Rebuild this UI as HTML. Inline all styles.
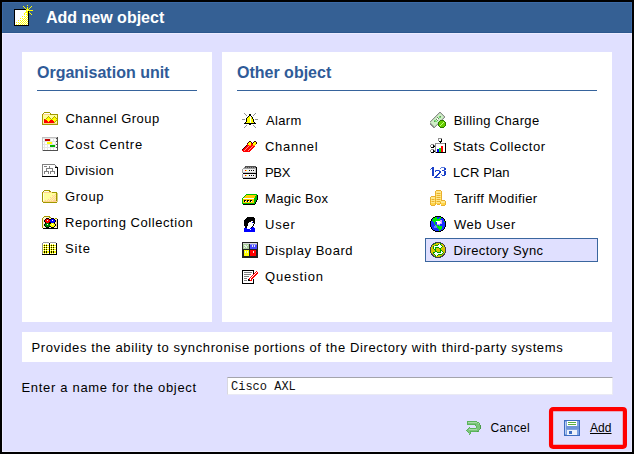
<!DOCTYPE html>
<html><head><meta charset="utf-8">
<style>
*{margin:0;padding:0;box-sizing:border-box}
html,body{width:634px;height:454px;overflow:hidden;background:#000}
body{position:relative;font-family:"Liberation Sans",sans-serif;font-size:13px;color:#000}
.a{position:absolute}
#hdr{left:2px;top:2px;width:630px;height:31px;background:#356094;border-top:1px solid #3c6aa6;border-left:1px solid #3c6aa6;border-right:1px solid #3c6aa6;border-bottom:1px solid #2c578e}
#bd{left:2px;top:33px;width:630px;height:419px;background:#e0e0ff;border:1px solid #ececff}
.pn{background:#fff}
.t{position:absolute;white-space:nowrap;line-height:13px;font-size:13px}
.h{position:absolute;white-space:nowrap;font-weight:bold;font-size:16px;line-height:16px;color:#2f5b98}
.ul{position:absolute;height:1px;background:#36639c}
.ic{position:absolute;width:16px;height:16px}
</style></head><body>
<div id="hdr" class="a"></div>
<div id="bd" class="a"></div>
<div class="h" style="left:46px;top:10px;color:#fff">Add new object</div>

<div class="a pn" style="left:22px;top:52px;width:190px;height:270px"></div>
<div class="a pn" style="left:222px;top:52px;width:390px;height:270px"></div>
<div class="h" style="left:37px;top:65px">Organisation unit</div>
<div class="ul" style="left:37px;top:90px;width:160px"></div>
<div class="h" style="left:237px;top:65px">Other object</div>
<div class="ul" style="left:237px;top:90px;width:360px"></div>

<div class="t" style="left:65.5px;top:112px;letter-spacing:0.458px">Channel Group</div>
<div class="t" style="left:65px;top:138px;letter-spacing:0.78px">Cost Centre</div>
<div class="t" style="left:65px;top:164px;letter-spacing:0.457px">Division</div>
<div class="t" style="left:65px;top:190px;letter-spacing:0.575px">Group</div>
<div class="t" style="left:65px;top:216px;letter-spacing:0.563px">Reporting Collection</div>
<div class="t" style="left:65px;top:242px;letter-spacing:0.833px">Site</div>

<div class="t" style="left:266px;top:114px;letter-spacing:0.35px">Alarm</div>
<div class="t" style="left:265px;top:140px;letter-spacing:0.7px">Channel</div>
<div class="t" style="left:265px;top:166px;letter-spacing:-0.3px">PBX</div>
<div class="t" style="left:265px;top:192px;letter-spacing:0.3px">Magic Box</div>
<div class="t" style="left:265px;top:218px;letter-spacing:0.767px">User</div>
<div class="t" style="left:265px;top:244px;letter-spacing:0.55px">Display Board</div>
<div class="t" style="left:265px;top:270px;letter-spacing:0.857px">Question</div>

<div class="a" style="left:425px;top:238px;width:173px;height:24px;background:#e0e0ff;border:1px solid #3a669e"></div>
<div class="t" style="left:453.7px;top:114px;letter-spacing:0.346px">Billing Charge</div>
<div class="t" style="left:453px;top:140px;letter-spacing:0.536px">Stats Collector</div>
<div class="t" style="left:453px;top:166px;letter-spacing:0.129px">LCR Plan</div>
<div class="t" style="left:454px;top:192px;letter-spacing:0.379px">Tariff Modifier</div>
<div class="t" style="left:454px;top:218px;letter-spacing:0.543px">Web User</div>
<div class="t" style="left:453.4px;top:244px;letter-spacing:0.4px">Directory Sync</div>

<div class="a pn" style="left:22px;top:332px;width:590px;height:30px"></div>
<div class="t" style="left:31.5px;top:341px;letter-spacing:0.622px">Provides the ability to synchronise portions of the Directory with third-party systems</div>
<div class="t" style="left:21.5px;top:381px;letter-spacing:0.685px">Enter a name for the object</div>
<div class="a" style="left:227px;top:377px;width:386px;height:18px;background:#fff;border-top:1px solid #a4a4ac;border-left:1px solid #d8d8e0;border-right:1px solid #eaeaf4;border-bottom:1px solid #eaeaf4"></div>
<div class="t" style="left:231px;top:381px;font-family:'Liberation Mono',monospace;font-size:12px;color:#111">Cisco AXL</div>

<div class="t" style="left:490.5px;top:422px;font-size:12px;letter-spacing:0.38px">Cancel</div>
<div class="t" style="left:590px;top:422px;font-size:12px;letter-spacing:0.05px;text-decoration:underline">Add</div>
<svg class="a" style="left:540px;top:400px" width="94" height="54" viewBox="0 0 94 54"><rect x="11.05" y="9.2" width="73.85" height="37.6" rx="2" ry="2" fill="none" stroke="#ff0000" stroke-width="4.2"/></svg>
<!-- header icon -->
<svg class="a" style="left:10px;top:4px" width="24" height="24" viewBox="0 0 24 24" shape-rendering="crispEdges"><!-- header icon --><path fill="#ffff00" d="M17 1h1v1h-1zM13 2h1v1h-1zM21 2h1v1h-1zM14 3h1v1h-1zM17 3h1v1h-1zM20 3h1v1h-1zM15 4h1v1h-1zM17 4h1v1h-1zM19 4h1v1h-1zM16 5h3v1h-3zM16 6h1v1h-1zM18 6h5v1h-5zM16 7h2v1h-2zM15 8h3v1h-3zM19 8h1v1h-1zM14 9h1v1h-1zM17 9h1v1h-1zM20 9h1v1h-1zM14 10h1v1h-1zM16 10h2v1h-2zM21 10h1v1h-1zM17 11h1v1h-1zM12 12h1v1h-1zM14 12h1v1h-1zM16 12h1v1h-1zM15 13h1v1h-1zM17 13h1v1h-1zM10 14h1v1h-1zM12 14h1v1h-1zM14 14h1v1h-1zM16 14h1v1h-1zM13 15h1v1h-1zM15 15h1v1h-1zM17 15h1v1h-1zM8 16h1v1h-1zM10 16h1v1h-1zM12 16h1v1h-1zM14 16h1v1h-1zM16 16h1v1h-1zM11 17h1v1h-1zM13 17h1v1h-1zM15 17h1v1h-1zM17 17h1v1h-1zM6 18h1v1h-1zM8 18h1v1h-1zM10 18h1v1h-1zM12 18h1v1h-1zM14 18h1v1h-1zM16 18h1v1h-1zM9 19h1v1h-1zM11 19h1v1h-1zM13 19h1v1h-1zM15 19h1v1h-1zM17 19h1v1h-1zM6 20h1v1h-1zM8 20h1v1h-1zM10 20h1v1h-1zM12 20h1v1h-1zM14 20h1v1h-1zM16 20h1v1h-1z"/><path fill="#000000" d="M4 5h12v1h-12zM4 6h1v1h-1zM4 7h1v1h-1zM18 7h1v1h-1zM4 8h1v1h-1zM18 8h1v1h-1zM4 9h1v1h-1zM18 9h1v1h-1zM4 10h1v1h-1zM18 10h1v1h-1zM4 11h1v1h-1zM18 11h1v1h-1zM4 12h1v1h-1zM18 12h1v1h-1zM4 13h1v1h-1zM18 13h1v1h-1zM4 14h1v1h-1zM18 14h1v1h-1zM4 15h1v1h-1zM18 15h1v1h-1zM4 16h1v1h-1zM18 16h1v1h-1zM4 17h1v1h-1zM18 17h1v1h-1zM4 18h1v1h-1zM18 18h1v1h-1zM4 19h1v1h-1zM18 19h1v1h-1zM4 20h1v1h-1zM18 20h1v1h-1zM4 21h15v1h-15z"/><path fill="#ffffff" d="M5 6h11v1h-11zM5 7h11v1h-11zM5 8h10v1h-10zM5 9h9v1h-9zM15 9h2v1h-2zM5 10h9v1h-9zM15 10h1v1h-1zM5 11h12v1h-12zM5 12h7v1h-7zM13 12h1v1h-1zM15 12h1v1h-1zM17 12h1v1h-1zM5 13h10v1h-10zM16 13h1v1h-1zM5 14h5v1h-5zM11 14h1v1h-1zM13 14h1v1h-1zM15 14h1v1h-1zM17 14h1v1h-1zM5 15h8v1h-8zM14 15h1v1h-1zM16 15h1v1h-1zM5 16h3v1h-3zM9 16h1v1h-1zM11 16h1v1h-1zM13 16h1v1h-1zM15 16h1v1h-1zM17 16h1v1h-1zM5 17h6v1h-6zM12 17h1v1h-1zM14 17h1v1h-1zM16 17h1v1h-1zM5 18h1v1h-1zM7 18h1v1h-1zM9 18h1v1h-1zM11 18h1v1h-1zM13 18h1v1h-1zM15 18h1v1h-1zM17 18h1v1h-1zM5 19h4v1h-4zM10 19h1v1h-1zM12 19h1v1h-1zM14 19h1v1h-1zM16 19h1v1h-1zM5 20h1v1h-1zM7 20h1v1h-1zM9 20h1v1h-1zM11 20h1v1h-1zM13 20h1v1h-1zM15 20h1v1h-1zM17 20h1v1h-1z"/><path fill="#ffffc0" d="M17 6h1v1h-1z"/></svg>
<!-- Billing Charge -->
<svg class="a" style="left:430px;top:112px" width="16" height="16" viewBox="0 0 16 16" shape-rendering="crispEdges"><!-- Billing Charge --><path fill="#8c8c8c" d="M9 0h2v1h-2zM8 1h1v1h-1zM11 1h1v1h-1zM7 2h1v1h-1zM12 2h1v1h-1zM6 3h1v1h-1zM13 3h1v1h-1zM5 4h1v1h-1zM14 4h1v1h-1zM4 5h1v1h-1zM14 5h1v1h-1zM3 6h1v1h-1zM13 6h1v1h-1zM2 7h1v1h-1zM12 7h1v1h-1zM1 8h1v1h-1zM0 9h1v1h-1zM0 11h1v1h-1zM0 12h2v1h-2zM7 12h1v1h-1zM1 13h2v1h-2zM6 13h1v1h-1zM2 14h2v1h-2zM5 14h1v1h-1zM3 15h2v1h-2z"/><path fill="#b8d8b0" d="M9 1h2v1h-2zM8 2h1v1h-1zM11 2h1v1h-1zM7 3h1v1h-1zM12 3h1v1h-1zM6 4h1v1h-1zM13 4h1v1h-1zM5 5h1v1h-1zM13 5h1v1h-1zM4 6h1v1h-1zM12 6h1v1h-1zM3 7h1v1h-1zM11 7h1v1h-1zM2 8h1v1h-1zM1 9h1v1h-1zM0 10h1v1h-1zM1 11h1v1h-1zM7 11h1v1h-1zM2 12h1v1h-1zM6 12h1v1h-1zM3 13h1v1h-1zM5 13h1v1h-1zM4 14h1v1h-1z"/><path fill="#d0ecc8" d="M9 2h2v1h-2zM8 3h4v1h-4zM7 4h2v1h-2zM11 4h2v1h-2zM6 5h1v1h-1zM8 5h1v1h-1zM11 5h2v1h-2zM5 6h2v1h-2zM9 6h3v1h-3zM4 7h2v1h-2zM8 7h3v1h-3zM3 8h1v1h-1zM6 8h1v1h-1zM8 8h2v1h-2zM2 9h2v1h-2zM7 9h2v1h-2zM1 10h7v1h-7zM2 11h5v1h-5zM3 12h3v1h-3zM4 13h1v1h-1z"/><path fill="#70e070" d="M9 4h1v1h-1zM9 5h2v1h-2zM4 8h2v1h-2zM5 9h2v1h-2z"/><path fill="#6a8a60" d="M10 4h1v1h-1zM7 5h1v1h-1zM8 6h1v1h-1zM6 7h1v1h-1zM7 8h1v1h-1zM4 9h1v1h-1z"/><path fill="#ffffff" d="M7 6h1v1h-1zM7 7h1v1h-1z"/><path fill="#2a7a00" d="M10 8h4v1h-4zM9 9h1v1h-1zM14 9h1v1h-1zM8 10h1v1h-1zM15 10h1v1h-1zM8 11h1v1h-1zM15 11h1v1h-1zM8 12h1v1h-1zM15 12h1v1h-1zM8 13h1v1h-1zM15 13h1v1h-1zM9 14h1v1h-1zM14 14h1v1h-1zM10 15h4v1h-4z"/><path fill="#66cc00" d="M10 9h4v1h-4zM9 10h4v1h-4zM14 10h1v1h-1zM9 11h3v1h-3zM13 11h2v1h-2zM9 12h2v1h-2zM12 12h3v1h-3zM9 13h1v1h-1zM11 13h4v1h-4zM10 14h4v1h-4z"/><path fill="#c0ff80" d="M13 10h1v1h-1zM12 11h1v1h-1zM11 12h1v1h-1zM10 13h1v1h-1z"/></svg>
<!-- Cancel arrow -->
<svg class="a" style="left:465px;top:420px" width="16" height="16" viewBox="0 0 16 16" shape-rendering="crispEdges"><!-- Cancel arrow --><path fill="#5ab45a" d="M2 1h10v1h-10zM2 2h1v1h-1zM12 2h2v1h-2zM2 3h1v1h-1zM14 3h1v1h-1zM2 4h9v1h-9zM14 4h1v1h-1zM10 5h1v1h-1zM11 6h1v1h-1zM4 7h1v1h-1zM11 7h1v1h-1zM3 8h1v1h-1zM5 8h6v1h-6zM2 9h1v1h-1zM14 9h1v1h-1zM1 10h1v1h-1zM13 10h1v1h-1zM2 11h1v1h-1zM5 11h7v1h-7zM13 11h1v1h-1zM3 12h1v1h-1zM5 12h1v1h-1zM5 13h1v1h-1zM4 14h1v1h-1z"/><path fill="#a6daa6" d="M3 2h9v1h-9zM13 3h1v1h-1zM4 9h8v1h-8z"/><path fill="#7cc47c" d="M3 3h10v1h-10zM11 4h3v1h-3zM11 5h4v1h-4zM12 6h3v1h-3zM12 7h3v1h-3zM4 8h1v1h-1zM11 8h4v1h-4zM3 9h1v1h-1zM12 9h2v1h-2zM2 10h11v1h-11zM3 11h2v1h-2zM4 12h1v1h-1zM4 13h1v1h-1z"/><path fill="#4a9a4a" d="M15 5h1v1h-1zM15 6h1v1h-1zM15 7h1v1h-1zM15 8h1v1h-1zM12 11h1v1h-1z"/></svg>
<!-- Floppy -->
<svg class="a" style="left:564px;top:420px" width="16" height="16" viewBox="0 0 16 16" shape-rendering="crispEdges">
<path d="M0 0H16V15L15 16H0Z" fill="#3d6cc0"/>
<rect x="1" y="1" width="14" height="14" fill="#7ea2e2"/>
<rect x="3" y="1" width="10" height="5" fill="#fff"/>
<rect x="4" y="2" width="8" height="1" fill="#5cb040"/>
<rect x="4" y="4" width="8" height="1" fill="#5cb040"/>
<rect x="1" y="6" width="14" height="3" fill="#6e95d8"/>
<rect x="3" y="10" width="10" height="5" fill="#eef2fa"/>
<rect x="5" y="11" width="3" height="3" fill="#3d6cc0"/>
<rect x="1" y="2" width="1" height="12" fill="#b8ccf0"/>
</svg>
<svg class="a" style="left:42px;top:110px" width="16" height="16" viewBox="0 0 16 16" shape-rendering="crispEdges"><!-- channelgroup --><path fill="#a09800" d="M2 2h6v1h-6zM1 3h1v1h-1zM8 3h1v1h-1zM0 4h1v1h-1zM8 4h8v1h-8zM0 5h1v1h-1zM15 5h1v1h-1zM0 6h1v1h-1zM15 6h1v1h-1zM0 7h1v1h-1zM15 7h1v1h-1zM0 8h1v1h-1zM15 8h1v1h-1zM0 9h1v1h-1zM15 9h1v1h-1zM0 10h1v1h-1zM15 10h1v1h-1zM0 11h1v1h-1zM15 11h1v1h-1zM0 12h1v1h-1zM15 12h1v1h-1zM0 13h1v1h-1zM15 13h1v1h-1zM0 14h16v1h-16z"/><path fill="#ffffff" d="M2 3h6v1h-6z"/><path fill="#ffd48c" d="M1 4h7v1h-7zM1 13h14v1h-14z"/><path fill="#ffff9c" d="M1 5h14v1h-14zM1 6h5v1h-5zM7 6h5v1h-5zM13 6h2v1h-2zM1 7h4v1h-4zM8 7h3v1h-3zM14 7h1v1h-1zM1 8h3v1h-3zM9 8h1v1h-1zM1 9h1v1h-1zM1 10h1v1h-1zM1 11h1v1h-1zM14 11h1v1h-1zM1 12h1v1h-1zM13 12h2v1h-2z"/><path fill="#b0a800" d="M6 6h1v1h-1zM12 6h1v1h-1zM5 7h1v1h-1zM7 7h1v1h-1zM11 7h1v1h-1zM13 7h1v1h-1zM4 8h1v1h-1zM8 8h1v1h-1zM10 8h1v1h-1zM14 8h1v1h-1zM3 9h1v1h-1zM9 9h1v1h-1zM14 10h1v1h-1zM13 11h1v1h-1zM12 12h1v1h-1z"/><path fill="#ffff00" d="M6 7h1v1h-1zM12 7h1v1h-1zM5 8h3v1h-3zM11 8h3v1h-3zM4 9h5v1h-5zM10 9h5v1h-5zM5 10h3v1h-3zM11 10h3v1h-3zM6 11h1v1h-1zM12 11h1v1h-1z"/><path fill="#ff0000" d="M2 9h1v1h-1zM2 10h3v1h-3zM8 10h3v1h-3zM2 11h4v1h-4zM7 11h5v1h-5zM2 12h10v1h-10z"/></svg>
<svg class="a" style="left:42px;top:136px" width="16" height="16" viewBox="0 0 16 16" shape-rendering="crispEdges"><!-- costcentre --><path fill="#ffffff" d="M0 0h16v1h-16zM1 3h1v1h-1zM9 3h2v1h-2zM12 3h2v1h-2zM1 4h1v1h-1zM9 4h2v1h-2zM12 4h2v1h-2zM1 6h1v1h-1zM3 6h2v1h-2zM11 6h2v1h-2zM14 6h1v1h-1zM1 7h1v1h-1zM3 7h2v1h-2zM11 7h2v1h-2zM14 7h1v1h-1zM1 9h1v1h-1zM3 9h2v1h-2zM6 9h2v1h-2zM14 9h1v1h-1zM1 10h1v1h-1zM3 10h2v1h-2zM6 10h2v1h-2zM14 10h1v1h-1zM1 12h1v1h-1zM3 12h2v1h-2zM6 12h2v1h-2zM9 12h2v1h-2zM12 12h3v1h-3zM1 13h1v1h-1zM3 13h2v1h-2zM6 13h2v1h-2zM9 13h2v1h-2zM12 13h3v1h-3zM0 15h16v1h-16z"/><path fill="#c0c0c0" d="M0 1h15v1h-15zM0 2h1v1h-1zM0 3h1v1h-1zM0 4h1v1h-1zM0 5h1v1h-1zM0 6h1v1h-1zM0 7h1v1h-1zM0 8h1v1h-1zM0 9h1v1h-1zM0 10h1v1h-1zM0 11h1v1h-1zM0 12h1v1h-1zM0 13h1v1h-1zM0 14h1v1h-1z"/><path fill="#505050" d="M15 1h1v1h-1zM14 2h2v1h-2zM15 3h1v1h-1zM15 4h1v1h-1zM14 5h2v1h-2zM15 6h1v1h-1zM15 7h1v1h-1zM14 8h2v1h-2zM15 9h1v1h-1zM15 10h1v1h-1zM14 11h2v1h-2zM15 12h1v1h-1zM15 13h1v1h-1zM1 14h15v1h-15z"/><path fill="#e4e4e4" d="M1 2h13v1h-13zM2 3h1v1h-1zM8 3h1v1h-1zM11 3h1v1h-1zM14 3h1v1h-1zM2 4h1v1h-1zM8 4h1v1h-1zM11 4h1v1h-1zM14 4h1v1h-1zM1 5h13v1h-13zM2 6h1v1h-1zM10 6h1v1h-1zM13 6h1v1h-1zM2 7h1v1h-1zM10 7h1v1h-1zM13 7h1v1h-1zM1 8h13v1h-13zM2 9h1v1h-1zM5 9h1v1h-1zM13 9h1v1h-1zM2 10h1v1h-1zM5 10h1v1h-1zM13 10h1v1h-1zM1 11h13v1h-13zM2 12h1v1h-1zM5 12h1v1h-1zM8 12h1v1h-1zM11 12h1v1h-1zM2 13h1v1h-1zM5 13h1v1h-1zM8 13h1v1h-1zM11 13h1v1h-1z"/><path fill="#c00000" d="M3 3h5v1h-5zM3 4h5v1h-5z"/><path fill="#ffff00" d="M5 6h5v1h-5zM5 7h5v1h-5z"/><path fill="#00b000" d="M8 9h5v1h-5zM8 10h5v1h-5z"/></svg>
<svg class="a" style="left:42px;top:162px" width="16" height="16" viewBox="0 0 16 16" shape-rendering="crispEdges"><!-- division --><path fill="#ffffff" d="M0 0h16v1h-16zM0 1h16v1h-16zM13 2h3v1h-3zM1 3h12v1h-12zM14 3h2v1h-2zM1 4h1v1h-1zM5 4h2v1h-2zM8 4h5v1h-5zM15 4h1v1h-1zM1 5h6v1h-6zM8 5h5v1h-5zM1 6h3v1h-3zM11 6h4v1h-4zM1 7h3v1h-3zM5 7h5v1h-5zM11 7h4v1h-4zM1 8h3v1h-3zM5 8h5v1h-5zM11 8h4v1h-4zM1 9h1v1h-1zM7 9h1v1h-1zM13 9h2v1h-2zM1 10h1v1h-1zM3 10h3v1h-3zM7 10h1v1h-1zM9 10h3v1h-3zM13 10h2v1h-2zM1 11h1v1h-1zM3 11h3v1h-3zM7 11h1v1h-1zM9 11h3v1h-3zM13 11h2v1h-2zM1 12h14v1h-14zM1 13h14v1h-14zM0 15h16v1h-16z"/><path fill="#808080" d="M0 2h13v1h-13zM0 3h1v1h-1zM13 3h1v1h-1zM0 4h1v1h-1zM2 4h3v1h-3zM7 4h1v1h-1zM13 4h2v1h-2zM0 5h1v1h-1zM7 5h1v1h-1zM0 6h1v1h-1zM4 6h7v1h-7zM0 7h1v1h-1zM4 7h1v1h-1zM10 7h1v1h-1zM0 8h1v1h-1zM4 8h1v1h-1zM10 8h1v1h-1zM0 9h1v1h-1zM2 9h5v1h-5zM8 9h5v1h-5zM0 10h1v1h-1zM2 10h1v1h-1zM6 10h1v1h-1zM8 10h1v1h-1zM12 10h1v1h-1zM0 11h1v1h-1zM2 11h1v1h-1zM6 11h1v1h-1zM8 11h1v1h-1zM12 11h1v1h-1zM0 12h1v1h-1zM0 13h1v1h-1z"/><path fill="#000000" d="M13 5h3v1h-3zM15 6h1v1h-1zM15 7h1v1h-1zM15 8h1v1h-1zM15 9h1v1h-1zM15 10h1v1h-1zM15 11h1v1h-1zM15 12h1v1h-1zM15 13h1v1h-1zM0 14h16v1h-16z"/></svg>
<svg class="a" style="left:42px;top:188px" width="16" height="16" viewBox="0 0 16 16" shape-rendering="crispEdges"><!-- group --><path fill="#a09800" d="M2 2h6v1h-6zM1 3h1v1h-1zM7 3h2v1h-2zM0 4h1v1h-1zM10 4h5v1h-5zM0 5h1v1h-1zM14 5h1v1h-1zM0 6h1v1h-1zM14 6h1v1h-1zM0 7h1v1h-1zM14 7h1v1h-1zM0 8h1v1h-1zM14 8h1v1h-1zM0 9h1v1h-1zM14 9h1v1h-1zM0 10h1v1h-1zM14 10h1v1h-1zM0 11h1v1h-1zM14 11h1v1h-1zM0 12h1v1h-1zM14 12h1v1h-1zM0 13h1v1h-1zM1 14h14v1h-14z"/><path fill="#ffffe8" d="M2 3h5v1h-5zM1 5h1v1h-1zM1 6h1v1h-1zM1 7h1v1h-1zM1 8h1v1h-1zM1 9h1v1h-1zM1 10h1v1h-1zM1 11h1v1h-1zM1 12h1v1h-1z"/><path fill="#ffd48c" d="M1 4h9v1h-9zM1 13h14v1h-14z"/><path fill="#ffff9c" d="M2 5h12v1h-12zM2 6h11v1h-11zM2 7h8v1h-8zM11 7h1v1h-1zM13 7h1v1h-1zM2 8h9v1h-9zM12 8h1v1h-1zM2 9h6v1h-6zM9 9h1v1h-1zM11 9h1v1h-1zM13 9h1v1h-1zM2 10h7v1h-7zM10 10h1v1h-1zM12 10h1v1h-1zM2 11h4v1h-4zM7 11h1v1h-1zM9 11h1v1h-1zM11 11h1v1h-1zM13 11h1v1h-1zM2 12h1v1h-1zM4 12h1v1h-1zM6 12h1v1h-1zM8 12h1v1h-1zM10 12h1v1h-1z"/><path fill="#d8d080" d="M15 5h1v1h-1zM15 6h1v1h-1zM15 7h1v1h-1zM15 8h1v1h-1zM15 9h1v1h-1zM15 10h1v1h-1zM15 11h1v1h-1zM15 12h1v1h-1zM15 13h1v1h-1z"/><path fill="#ffc8a0" d="M13 6h1v1h-1zM10 7h1v1h-1zM12 7h1v1h-1zM11 8h1v1h-1zM13 8h1v1h-1zM8 9h1v1h-1zM10 9h1v1h-1zM12 9h1v1h-1zM9 10h1v1h-1zM11 10h1v1h-1zM13 10h1v1h-1zM6 11h1v1h-1zM8 11h1v1h-1zM10 11h1v1h-1zM12 11h1v1h-1zM3 12h1v1h-1zM5 12h1v1h-1zM7 12h1v1h-1zM9 12h1v1h-1zM11 12h3v1h-3z"/></svg>
<svg class="a" style="left:42px;top:214px" width="16" height="16" viewBox="0 0 16 16" shape-rendering="crispEdges"><!-- reporting --><path fill="#a09800" d="M2 2h6v1h-6zM1 3h1v1h-1zM7 3h2v1h-2zM0 4h1v1h-1zM13 4h2v1h-2zM0 5h1v1h-1zM0 6h1v1h-1zM0 7h1v1h-1zM0 8h1v1h-1zM0 9h1v1h-1zM0 10h1v1h-1zM0 11h1v1h-1zM0 12h1v1h-1zM0 13h1v1h-1z"/><path fill="#fff4d0" d="M2 3h5v1h-5zM1 4h2v1h-2zM1 5h1v1h-1zM14 5h1v1h-1zM1 6h1v1h-1zM1 7h1v1h-1zM1 8h1v1h-1zM1 9h1v1h-1zM1 10h1v1h-1zM1 11h1v1h-1zM1 12h1v1h-1zM1 13h2v1h-2zM13 13h2v1h-2z"/><path fill="#fff0c8" d="M3 4h1v1h-1zM7 4h2v1h-2zM12 4h1v1h-1zM2 5h1v1h-1zM13 5h1v1h-1zM2 8h1v1h-1zM13 8h1v1h-1zM2 9h1v1h-1zM13 9h1v1h-1zM2 12h1v1h-1zM13 12h1v1h-1zM3 13h1v1h-1zM7 13h2v1h-2zM12 13h1v1h-1z"/><path fill="#000000" d="M4 4h3v1h-3zM9 4h3v1h-3zM3 5h1v1h-1zM7 5h2v1h-2zM12 5h1v1h-1zM15 5h1v1h-1zM2 6h1v1h-1zM13 6h1v1h-1zM15 6h1v1h-1zM2 7h1v1h-1zM13 7h1v1h-1zM15 7h1v1h-1zM3 8h1v1h-1zM7 8h2v1h-2zM12 8h1v1h-1zM15 8h1v1h-1zM3 9h1v1h-1zM7 9h2v1h-2zM12 9h1v1h-1zM15 9h1v1h-1zM2 10h1v1h-1zM13 10h1v1h-1zM15 10h1v1h-1zM2 11h1v1h-1zM13 11h1v1h-1zM15 11h1v1h-1zM3 12h1v1h-1zM7 12h2v1h-2zM12 12h1v1h-1zM15 12h1v1h-1zM4 13h3v1h-3zM9 13h3v1h-3zM15 13h1v1h-1zM1 14h15v1h-15z"/><path fill="#ff0000" d="M4 5h3v1h-3zM3 6h2v1h-2zM6 6h2v1h-2zM3 7h5v1h-5zM4 8h3v1h-3z"/><path fill="#0000ff" d="M9 5h3v1h-3zM8 6h2v1h-2zM11 6h2v1h-2zM8 7h5v1h-5zM9 8h3v1h-3z"/><path fill="#ffffff" d="M5 6h1v1h-1zM10 6h1v1h-1zM5 10h1v1h-1zM10 10h1v1h-1z"/><path fill="#ffd090" d="M14 6h1v1h-1zM14 7h1v1h-1zM14 8h1v1h-1zM14 9h1v1h-1zM14 10h1v1h-1zM14 11h1v1h-1zM14 12h1v1h-1z"/><path fill="#008800" d="M4 9h3v1h-3zM3 10h2v1h-2zM6 10h2v1h-2zM3 11h5v1h-5zM4 12h3v1h-3z"/><path fill="#ffff00" d="M9 9h3v1h-3zM8 10h2v1h-2zM11 10h2v1h-2zM8 11h5v1h-5zM9 12h3v1h-3z"/></svg>
<svg class="a" style="left:42px;top:240px" width="16" height="16" viewBox="0 0 16 16" shape-rendering="crispEdges"><!-- site --><path fill="#a0a0a0" d="M1 2h6v1h-6zM8 2h6v1h-6z"/><path fill="#909090" d="M0 3h1v1h-1zM0 4h1v1h-1zM0 5h1v1h-1zM0 6h1v1h-1zM0 7h1v1h-1zM0 8h1v1h-1zM0 9h1v1h-1zM0 10h1v1h-1zM0 11h1v1h-1zM0 12h1v1h-1zM0 13h1v1h-1z"/><path fill="#ffffff" d="M1 3h6v1h-6zM8 3h6v1h-6zM1 4h1v1h-1zM3 4h1v1h-1zM5 4h2v1h-2zM8 4h1v1h-1zM10 4h1v1h-1zM12 4h2v1h-2zM1 6h1v1h-1zM3 6h1v1h-1zM5 6h2v1h-2zM8 6h1v1h-1zM10 6h1v1h-1zM12 6h2v1h-2zM1 8h1v1h-1zM3 8h1v1h-1zM5 8h2v1h-2zM8 8h1v1h-1zM10 8h1v1h-1zM12 8h2v1h-2zM1 10h1v1h-1zM3 10h1v1h-1zM5 10h2v1h-2zM8 10h1v1h-1zM10 10h1v1h-1zM12 10h2v1h-2zM1 13h1v1h-1zM3 13h1v1h-1zM5 13h2v1h-2zM8 13h1v1h-1zM10 13h1v1h-1zM12 13h2v1h-2z"/><path fill="#000000" d="M7 3h1v1h-1zM14 3h1v1h-1zM7 4h1v1h-1zM14 4h1v1h-1zM2 5h1v1h-1zM4 5h1v1h-1zM7 5h1v1h-1zM9 5h1v1h-1zM11 5h1v1h-1zM14 5h1v1h-1zM7 6h1v1h-1zM14 6h1v1h-1zM2 7h1v1h-1zM4 7h1v1h-1zM7 7h1v1h-1zM9 7h1v1h-1zM11 7h1v1h-1zM14 7h1v1h-1zM7 8h1v1h-1zM14 8h1v1h-1zM2 9h1v1h-1zM4 9h1v1h-1zM7 9h1v1h-1zM9 9h1v1h-1zM11 9h1v1h-1zM14 9h1v1h-1zM7 10h1v1h-1zM14 10h1v1h-1zM2 11h1v1h-1zM4 11h1v1h-1zM7 11h1v1h-1zM9 11h1v1h-1zM11 11h1v1h-1zM14 11h1v1h-1zM2 12h1v1h-1zM4 12h1v1h-1zM7 12h1v1h-1zM9 12h1v1h-1zM11 12h1v1h-1zM14 12h1v1h-1zM7 13h1v1h-1zM14 13h1v1h-1zM0 14h15v1h-15z"/><path fill="#ffff00" d="M2 4h1v1h-1zM4 4h1v1h-1zM9 4h1v1h-1zM11 4h1v1h-1zM1 5h1v1h-1zM3 5h1v1h-1zM5 5h2v1h-2zM8 5h1v1h-1zM10 5h1v1h-1zM12 5h2v1h-2zM2 6h1v1h-1zM4 6h1v1h-1zM9 6h1v1h-1zM11 6h1v1h-1zM1 7h1v1h-1zM3 7h1v1h-1zM5 7h2v1h-2zM8 7h1v1h-1zM10 7h1v1h-1zM12 7h2v1h-2zM2 8h1v1h-1zM4 8h1v1h-1zM9 8h1v1h-1zM11 8h1v1h-1zM1 9h1v1h-1zM3 9h1v1h-1zM5 9h2v1h-2zM8 9h1v1h-1zM10 9h1v1h-1zM12 9h2v1h-2zM2 10h1v1h-1zM4 10h1v1h-1zM9 10h1v1h-1zM11 10h1v1h-1zM1 11h1v1h-1zM3 11h1v1h-1zM5 11h2v1h-2zM8 11h1v1h-1zM10 11h1v1h-1zM12 11h2v1h-2zM1 12h1v1h-1zM3 12h1v1h-1zM5 12h2v1h-2zM8 12h1v1h-1zM10 12h1v1h-1zM12 12h2v1h-2zM2 13h1v1h-1zM4 13h1v1h-1zM9 13h1v1h-1zM11 13h1v1h-1z"/></svg>
<svg class="a" style="left:242px;top:112px" width="16" height="16" viewBox="0 0 16 16" shape-rendering="crispEdges"><!-- alarm --><path fill="#909090" d="M2 1h1v1h-1zM13 1h1v1h-1zM3 2h1v1h-1zM12 2h1v1h-1zM4 3h1v1h-1zM11 3h1v1h-1zM0 7h3v1h-3zM13 7h3v1h-3zM4 13h1v1h-1zM11 13h1v1h-1zM3 14h1v1h-1zM12 14h1v1h-1zM2 15h1v1h-1zM13 15h1v1h-1z"/><path fill="#000000" d="M7 2h2v1h-2zM7 3h2v1h-2zM6 4h1v1h-1zM9 4h1v1h-1zM5 5h1v1h-1zM10 5h1v1h-1zM4 6h1v1h-1zM10 6h1v1h-1zM4 7h1v1h-1zM11 7h1v1h-1zM4 8h1v1h-1zM11 8h1v1h-1zM4 9h1v1h-1zM11 9h1v1h-1zM3 10h1v1h-1zM12 10h1v1h-1zM2 11h12v1h-12zM7 12h2v1h-2z"/><path fill="#ffff00" d="M7 4h1v1h-1zM6 5h2v1h-2zM9 5h1v1h-1zM5 6h3v1h-3zM9 6h1v1h-1zM5 7h3v1h-3zM9 7h2v1h-2zM5 8h3v1h-3zM9 8h2v1h-2zM5 9h3v1h-3zM9 9h2v1h-2zM4 10h4v1h-4zM9 10h3v1h-3z"/><path fill="#ffffff" d="M8 4h1v1h-1zM8 5h1v1h-1zM8 6h1v1h-1zM8 7h1v1h-1zM8 8h1v1h-1zM8 9h1v1h-1zM8 10h1v1h-1z"/></svg>
<svg class="a" style="left:242px;top:138px" width="16" height="16" viewBox="0 0 16 16" shape-rendering="crispEdges"><!-- channel --><path fill="#400000" d="M7 3h2v1h-2zM12 3h2v1h-2zM6 4h1v1h-1zM9 4h1v1h-1zM11 4h1v1h-1zM14 4h1v1h-1zM5 5h1v1h-1zM10 5h1v1h-1zM14 5h1v1h-1zM4 7h1v1h-1zM3 8h1v1h-1zM2 9h1v1h-1zM1 10h1v1h-1zM0 11h1v1h-1z"/><path fill="#ffff00" d="M7 4h2v1h-2zM12 4h2v1h-2zM6 5h3v1h-3zM11 5h3v1h-3zM6 6h3v1h-3zM11 6h2v1h-2z"/><path fill="#ff0000" d="M9 5h1v1h-1zM5 6h1v1h-1zM9 6h2v1h-2zM5 7h2v1h-2zM9 7h2v1h-2zM4 8h2v1h-2zM7 8h3v1h-3zM11 8h2v1h-2zM3 9h2v1h-2zM6 9h3v1h-3zM10 9h2v1h-2zM2 10h2v1h-2zM5 10h3v1h-3zM9 10h2v1h-2zM1 11h2v1h-2zM4 11h3v1h-3zM8 11h2v1h-2zM0 12h2v1h-2zM3 12h3v1h-3zM7 12h2v1h-2zM1 13h7v1h-7z"/><path fill="#ffa000" d="M13 6h1v1h-1zM7 7h2v1h-2zM11 7h2v1h-2z"/><path fill="#ff9090" d="M6 8h1v1h-1zM10 8h1v1h-1zM5 9h1v1h-1zM9 9h1v1h-1zM4 10h1v1h-1zM8 10h1v1h-1zM3 11h1v1h-1zM7 11h1v1h-1zM2 12h1v1h-1zM6 12h1v1h-1z"/></svg>
<svg class="a" style="left:242px;top:164px" width="16" height="16" viewBox="0 0 16 16" shape-rendering="crispEdges"><!-- pbx --><path fill="#505050" d="M3 2h11v1h-11zM3 3h1v1h-1zM5 3h1v1h-1zM7 3h1v1h-1zM9 3h1v1h-1zM11 3h1v1h-1zM13 3h1v1h-1z"/><path fill="#909090" d="M2 3h1v1h-1zM4 3h1v1h-1zM6 3h1v1h-1zM8 3h1v1h-1zM10 3h1v1h-1zM12 3h1v1h-1z"/><path fill="#000000" d="M14 3h1v1h-1zM14 4h1v1h-1zM14 5h1v1h-1zM7 6h1v1h-1zM9 6h1v1h-1zM11 6h1v1h-1zM14 6h1v1h-1zM14 7h1v1h-1zM14 8h1v1h-1zM1 9h14v1h-14zM14 10h1v1h-1zM7 11h1v1h-1zM9 11h1v1h-1zM11 11h1v1h-1zM14 11h1v1h-1zM14 12h1v1h-1zM14 13h1v1h-1zM1 14h13v1h-13z"/><path fill="#a0a0a0" d="M1 4h12v1h-12zM0 5h1v1h-1zM0 6h1v1h-1zM0 7h1v1h-1zM0 8h1v1h-1zM0 10h1v1h-1zM0 11h1v1h-1zM0 12h1v1h-1zM0 13h1v1h-1z"/><path fill="#c8c8c8" d="M13 4h1v1h-1zM13 5h1v1h-1zM13 6h1v1h-1zM13 7h1v1h-1zM1 8h13v1h-13zM13 10h1v1h-1zM13 11h1v1h-1zM13 12h1v1h-1zM1 13h13v1h-13z"/><path fill="#f4f4f4" d="M1 5h12v1h-12zM1 6h2v1h-2zM5 6h2v1h-2zM8 6h1v1h-1zM10 6h1v1h-1zM12 6h1v1h-1zM1 7h12v1h-12zM1 10h12v1h-12zM1 11h2v1h-2zM5 11h2v1h-2zM8 11h1v1h-1zM10 11h1v1h-1zM12 11h1v1h-1zM1 12h12v1h-12z"/><path fill="#ff0000" d="M3 6h1v1h-1zM3 11h1v1h-1z"/><path fill="#ffff00" d="M4 6h1v1h-1zM4 11h1v1h-1z"/></svg>
<svg class="a" style="left:242px;top:190px" width="16" height="16" viewBox="0 0 16 16" shape-rendering="crispEdges"><!-- magicbox --><path fill="#00c000" d="M4 4h11v1h-11zM3 5h1v1h-1zM14 5h1v1h-1zM2 6h1v1h-1zM13 6h2v1h-2zM1 7h1v1h-1zM13 7h2v1h-2zM0 8h1v1h-1zM12 8h3v1h-3zM0 9h1v1h-1zM12 9h3v1h-3zM0 10h1v1h-1zM12 10h2v1h-2zM0 11h1v1h-1zM12 11h2v1h-2zM0 12h1v1h-1zM12 12h1v1h-1zM0 13h13v1h-13z"/><path fill="#ffcc00" d="M4 5h10v1h-10zM3 6h10v1h-10zM2 7h11v1h-11zM1 9h11v1h-11zM1 10h1v1h-1zM4 10h1v1h-1zM7 10h1v1h-1zM10 10h2v1h-2zM1 11h1v1h-1zM4 11h1v1h-1zM7 11h1v1h-1zM10 11h2v1h-2zM1 12h11v1h-11z"/><path fill="#000000" d="M15 5h1v1h-1zM15 6h1v1h-1zM15 7h1v1h-1zM15 8h1v1h-1zM15 9h1v1h-1zM2 10h2v1h-2zM5 10h2v1h-2zM8 10h2v1h-2zM14 10h1v1h-1zM2 11h1v1h-1zM5 11h1v1h-1zM8 11h1v1h-1zM14 11h1v1h-1zM13 12h1v1h-1zM13 13h1v1h-1zM1 14h12v1h-12z"/><path fill="#ffffff" d="M1 8h11v1h-11zM3 11h1v1h-1zM6 11h1v1h-1zM9 11h1v1h-1z"/></svg>
<svg class="a" style="left:242px;top:216px" width="16" height="16" viewBox="0 0 16 16" shape-rendering="crispEdges"><!-- user --><path fill="#000000" d="M5 1h7v1h-7zM4 2h9v1h-9zM3 3h10v1h-10zM2 4h11v1h-11zM2 5h7v1h-7zM11 5h2v1h-2zM2 6h5v1h-5zM11 6h2v1h-2zM2 7h4v1h-4zM12 7h1v1h-1zM2 8h4v1h-4zM11 8h1v1h-1zM2 9h4v1h-4zM11 9h1v1h-1zM3 10h2v1h-2zM10 10h1v1h-1zM3 11h2v1h-2zM9 11h1v1h-1z"/><path fill="#ffffff" d="M9 5h2v1h-2zM7 6h3v1h-3zM6 7h6v1h-6zM6 8h5v1h-5zM6 9h5v1h-5zM5 10h5v1h-5zM5 11h4v1h-4zM5 12h3v1h-3zM8 13h1v1h-1z"/><path fill="#0000ff" d="M10 6h1v1h-1zM10 11h2v1h-2zM2 12h3v1h-3zM8 12h5v1h-5zM2 13h6v1h-6zM9 13h4v1h-4zM2 14h11v1h-11zM2 15h11v1h-11z"/></svg>
<svg class="a" style="left:242px;top:242px" width="16" height="16" viewBox="0 0 16 16" shape-rendering="crispEdges"><!-- display --><path fill="#202020" d="M0 0h16v1h-16zM0 1h1v1h-1zM15 1h1v1h-1zM0 2h1v1h-1zM7 2h1v1h-1zM15 2h1v1h-1zM0 3h1v1h-1zM7 3h1v1h-1zM15 3h1v1h-1zM0 4h1v1h-1zM7 4h1v1h-1zM15 4h1v1h-1zM0 5h1v1h-1zM7 5h1v1h-1zM15 5h1v1h-1zM0 6h1v1h-1zM7 6h1v1h-1zM15 6h1v1h-1zM0 7h16v1h-16zM0 8h2v1h-2zM7 8h1v1h-1zM14 8h2v1h-2zM0 9h2v1h-2zM7 9h1v1h-1zM14 9h2v1h-2zM0 10h2v1h-2zM7 10h1v1h-1zM14 10h2v1h-2zM0 11h2v1h-2zM7 11h1v1h-1zM14 11h2v1h-2zM0 12h2v1h-2zM7 12h1v1h-1zM14 12h2v1h-2zM0 13h2v1h-2zM7 13h1v1h-1zM14 13h2v1h-2zM0 14h16v1h-16zM0 15h16v1h-16z"/><path fill="#d8d8d8" d="M1 1h14v1h-14z"/><path fill="#a8cc98" d="M1 2h6v1h-6zM1 3h1v1h-1zM4 3h1v1h-1zM6 3h1v1h-1zM1 4h2v1h-2zM5 4h2v1h-2zM1 5h1v1h-1zM3 5h1v1h-1zM5 5h2v1h-2zM1 6h6v1h-6z"/><path fill="#9090ff" d="M8 2h7v1h-7z"/><path fill="#e8f0e8" d="M2 3h2v1h-2zM5 3h1v1h-1zM10 3h1v1h-1zM12 3h1v1h-1zM3 4h2v1h-2zM10 4h1v1h-1zM12 4h1v1h-1zM2 5h1v1h-1zM4 5h1v1h-1zM3 9h1v1h-1zM5 9h1v1h-1zM11 9h1v1h-1zM3 10h1v1h-1zM5 10h1v1h-1zM11 10h1v1h-1z"/><path fill="#4848ff" d="M8 3h2v1h-2zM11 3h1v1h-1zM13 3h2v1h-2zM8 4h2v1h-2zM11 4h1v1h-1zM13 4h2v1h-2zM8 5h7v1h-7zM8 6h7v1h-7z"/><path fill="#ffff00" d="M2 8h5v1h-5zM2 9h1v1h-1zM4 9h1v1h-1zM6 9h1v1h-1zM2 10h1v1h-1zM4 10h1v1h-1zM6 10h1v1h-1zM2 11h5v1h-5zM2 12h5v1h-5zM2 13h5v1h-5z"/><path fill="#ff0000" d="M8 8h6v1h-6zM8 9h3v1h-3zM12 9h2v1h-2zM8 10h3v1h-3zM12 10h2v1h-2zM8 11h6v1h-6zM8 12h6v1h-6zM8 13h6v1h-6z"/></svg>
<svg class="a" style="left:242px;top:268px" width="16" height="16" viewBox="0 0 16 16" shape-rendering="crispEdges"><!-- question --><path fill="#000000" d="M0 2h12v1h-12zM0 3h1v1h-1zM11 3h1v1h-1zM0 4h1v1h-1zM11 4h1v1h-1zM0 5h1v1h-1zM11 5h1v1h-1zM0 6h1v1h-1zM0 7h1v1h-1zM0 8h1v1h-1zM0 9h1v1h-1zM0 10h1v1h-1zM0 11h1v1h-1zM6 11h1v1h-1zM11 11h1v1h-1zM0 12h1v1h-1zM6 12h2v1h-2zM11 12h1v1h-1zM0 13h1v1h-1zM11 13h1v1h-1zM0 14h1v1h-1zM11 14h1v1h-1zM0 15h12v1h-12z"/><path fill="#ffffff" d="M1 3h10v1h-10zM1 4h1v1h-1zM10 4h1v1h-1zM14 4h1v1h-1zM1 5h10v1h-10zM13 5h1v1h-1zM1 6h1v1h-1zM9 6h2v1h-2zM12 6h1v1h-1zM1 7h9v1h-9zM11 7h1v1h-1zM1 8h1v1h-1zM7 8h2v1h-2zM10 8h1v1h-1zM1 9h7v1h-7zM9 9h1v1h-1zM1 10h1v1h-1zM5 10h2v1h-2zM8 10h1v1h-1zM1 11h5v1h-5zM8 11h1v1h-1zM10 11h1v1h-1zM1 12h1v1h-1zM5 12h1v1h-1zM10 12h1v1h-1zM1 13h10v1h-10zM1 14h10v1h-10z"/><path fill="#ff0000" d="M14 3h1v1h-1zM13 4h1v1h-1zM15 4h1v1h-1zM12 5h1v1h-1zM14 5h2v1h-2zM11 6h1v1h-1zM13 6h2v1h-2zM10 7h1v1h-1zM12 7h2v1h-2zM9 8h1v1h-1zM11 8h2v1h-2zM8 9h1v1h-1zM10 9h2v1h-2zM7 10h1v1h-1zM9 10h2v1h-2zM7 11h1v1h-1zM9 11h1v1h-1zM8 12h2v1h-2z"/><path fill="#808080" d="M2 4h8v1h-8zM2 6h7v1h-7zM2 8h5v1h-5zM2 10h3v1h-3zM2 12h3v1h-3z"/></svg>
<svg class="a" style="left:430px;top:138px" width="16" height="16" viewBox="0 0 16 16" shape-rendering="crispEdges"><!-- stats --><path fill="#909090" d="M8 0h4v1h-4zM8 1h1v1h-1zM8 2h1v1h-1zM5 5h10v1h-10zM1 6h3v1h-3zM5 6h1v1h-1zM0 7h1v1h-1zM4 7h2v1h-2zM0 8h1v1h-1zM5 8h1v1h-1zM5 9h1v1h-1zM5 10h1v1h-1zM1 11h3v1h-3zM5 11h1v1h-1zM0 12h1v1h-1zM4 12h2v1h-2zM0 13h1v1h-1zM5 13h1v1h-1zM5 14h1v1h-1z"/><path fill="#000000" d="M11 1h1v1h-1zM11 2h1v1h-1zM9 3h3v1h-3zM10 4h1v1h-1zM15 5h1v1h-1zM15 6h1v1h-1zM3 7h1v1h-1zM15 7h1v1h-1zM3 8h2v1h-2zM15 8h1v1h-1zM1 9h3v1h-3zM15 9h1v1h-1zM15 10h1v1h-1zM15 11h1v1h-1zM3 12h1v1h-1zM15 12h1v1h-1zM3 13h2v1h-2zM15 13h1v1h-1zM1 14h3v1h-3zM6 14h10v1h-10z"/><path fill="#ffffff" d="M6 6h9v1h-9zM6 7h9v1h-9zM6 8h5v1h-5zM13 8h2v1h-2zM6 9h5v1h-5zM13 9h2v1h-2zM6 10h3v1h-3zM13 10h2v1h-2zM6 11h1v1h-1zM13 11h2v1h-2zM6 12h1v1h-1zM13 12h2v1h-2zM6 13h1v1h-1zM13 13h2v1h-2z"/><path fill="#ff0000" d="M11 8h2v1h-2zM11 9h2v1h-2zM11 10h2v1h-2zM11 11h2v1h-2zM11 12h2v1h-2zM11 13h2v1h-2z"/><path fill="#00ee00" d="M9 10h2v1h-2zM9 11h2v1h-2zM9 12h2v1h-2zM9 13h2v1h-2z"/><path fill="#0000ff" d="M7 11h2v1h-2zM7 12h2v1h-2zM7 13h2v1h-2z"/></svg>
<svg class="a" style="left:430px;top:164px" width="16" height="16" viewBox="0 0 16 16" shape-rendering="crispEdges"><!-- lcr --><path fill="#1a40c8" d="M2 3h2v1h-2zM1 4h3v1h-3zM14 4h2v1h-2zM2 5h2v1h-2zM14 5h2v1h-2zM2 6h2v1h-2zM6 6h3v1h-3zM12 6h2v1h-2zM2 7h2v1h-2zM5 7h1v1h-1zM9 7h2v1h-2zM14 7h2v1h-2zM2 8h2v1h-2zM9 8h2v1h-2zM14 8h2v1h-2zM2 9h2v1h-2zM8 9h2v1h-2zM14 9h2v1h-2zM2 10h2v1h-2zM7 10h2v1h-2zM14 10h2v1h-2zM2 11h2v1h-2zM6 11h2v1h-2zM12 11h3v1h-3zM5 12h2v1h-2zM4 13h6v1h-6z"/><path fill="#6080e0" d="M11 3h4v1h-4zM10 4h1v1h-1zM0 5h1v1h-1zM5 6h1v1h-1zM9 6h1v1h-1zM14 6h1v1h-1zM11 10h1v1h-1z"/></svg>
<svg class="a" style="left:430px;top:190px" width="16" height="16" viewBox="0 0 16 16" shape-rendering="crispEdges"><!-- tariff --><path fill="#e8b030" d="M6 0h5v1h-5zM5 1h1v1h-1zM11 1h1v1h-1zM5 2h1v1h-1zM11 2h1v1h-1zM5 3h1v1h-1zM7 3h3v1h-3zM11 3h1v1h-1zM5 4h1v1h-1zM11 4h1v1h-1zM5 5h1v1h-1zM7 5h3v1h-3zM11 5h1v1h-1zM1 6h5v1h-5zM11 6h1v1h-1zM0 7h1v1h-1zM5 7h1v1h-1zM7 7h3v1h-3zM11 7h1v1h-1zM0 8h1v1h-1zM5 8h1v1h-1zM11 8h1v1h-1zM0 9h1v1h-1zM2 9h2v1h-2zM5 9h1v1h-1zM7 9h3v1h-3zM11 9h1v1h-1zM0 10h1v1h-1zM5 10h1v1h-1zM11 10h4v1h-4zM0 11h1v1h-1zM2 11h2v1h-2zM5 11h1v1h-1zM7 11h3v1h-3zM15 11h1v1h-1zM0 12h1v1h-1zM5 12h1v1h-1zM10 12h1v1h-1zM15 12h1v1h-1zM0 13h1v1h-1zM5 13h1v1h-1zM10 13h1v1h-1zM15 13h1v1h-1zM0 14h1v1h-1zM5 14h1v1h-1zM7 14h3v1h-3zM15 14h1v1h-1zM1 15h4v1h-4zM11 15h4v1h-4z"/><path fill="#ffe88c" d="M6 1h5v1h-5zM6 2h5v1h-5zM6 4h5v1h-5zM6 6h5v1h-5zM1 7h4v1h-4zM1 8h4v1h-4zM6 8h5v1h-5zM1 10h4v1h-4zM6 10h5v1h-5zM11 11h4v1h-4zM1 12h4v1h-4zM6 12h4v1h-4zM11 12h4v1h-4z"/><path fill="#ffd448" d="M6 3h1v1h-1zM10 3h1v1h-1zM6 5h1v1h-1zM10 5h1v1h-1zM6 7h1v1h-1zM10 7h1v1h-1zM1 9h1v1h-1zM4 9h1v1h-1zM6 9h1v1h-1zM10 9h1v1h-1zM1 11h1v1h-1zM4 11h1v1h-1zM6 11h1v1h-1zM10 11h1v1h-1zM1 13h4v1h-4zM6 13h4v1h-4zM11 13h4v1h-4zM1 14h4v1h-4zM11 14h4v1h-4z"/></svg>
<svg class="a" style="left:430px;top:216px" width="16" height="16" viewBox="0 0 16 16" shape-rendering="crispEdges"><!-- globe --><path fill="#000000" d="M5 0h6v1h-6zM3 1h2v1h-2zM11 1h2v1h-2zM2 2h1v1h-1zM13 2h1v1h-1zM1 3h1v1h-1zM14 3h1v1h-1zM1 4h1v1h-1zM14 4h1v1h-1zM0 5h1v1h-1zM15 5h1v1h-1zM0 6h1v1h-1zM15 6h1v1h-1zM0 7h1v1h-1zM15 7h1v1h-1zM0 8h1v1h-1zM15 8h1v1h-1zM0 9h1v1h-1zM15 9h1v1h-1zM0 10h1v1h-1zM15 10h1v1h-1zM1 11h1v1h-1zM14 11h1v1h-1zM1 12h1v1h-1zM14 12h1v1h-1zM2 13h1v1h-1zM13 13h1v1h-1zM3 14h2v1h-2zM11 14h2v1h-2zM5 15h6v1h-6z"/><path fill="#00ee00" d="M5 1h2v1h-2zM10 1h1v1h-1zM3 2h4v1h-4zM9 2h2v1h-2zM3 3h7v1h-7zM2 4h8v1h-8zM3 5h3v1h-3zM14 5h1v1h-1zM4 6h1v1h-1zM4 7h1v1h-1zM5 8h1v1h-1zM6 9h2v1h-2zM7 10h5v1h-5zM7 11h5v1h-5zM8 12h4v1h-4zM9 13h2v1h-2zM9 14h1v1h-1z"/><path fill="#1830ff" d="M7 1h3v1h-3zM7 2h2v1h-2zM11 2h2v1h-2zM2 3h1v1h-1zM10 3h4v1h-4zM12 4h2v1h-2zM1 5h2v1h-2zM12 5h2v1h-2zM1 6h3v1h-3zM5 6h2v1h-2zM12 6h3v1h-3zM1 7h3v1h-3zM5 7h2v1h-2zM12 7h3v1h-3zM1 8h4v1h-4zM6 8h1v1h-1zM10 8h5v1h-5zM1 9h4v1h-4zM8 9h1v1h-1zM10 9h5v1h-5zM1 10h3v1h-3zM12 10h3v1h-3zM2 11h2v1h-2zM12 11h2v1h-2zM2 12h6v1h-6zM12 12h2v1h-2zM3 13h6v1h-6zM11 13h2v1h-2zM5 14h4v1h-4zM10 14h1v1h-1z"/><path fill="#d0a0ff" d="M10 4h2v1h-2zM10 5h2v1h-2zM11 6h1v1h-1zM10 7h2v1h-2zM7 8h3v1h-3z"/><path fill="#ffffff" d="M6 5h4v1h-4zM7 6h4v1h-4zM7 7h3v1h-3z"/><path fill="#6080ff" d="M5 9h1v1h-1zM9 9h1v1h-1zM4 10h3v1h-3zM4 11h3v1h-3z"/></svg>
<svg class="a" style="left:430px;top:242px" width="16" height="16" viewBox="0 0 16 16" shape-rendering="crispEdges"><!-- dirsync --><path fill="#404050" d="M5 0h6v1h-6zM3 1h2v1h-2zM11 1h2v1h-2zM2 2h1v1h-1zM13 2h1v1h-1zM1 3h1v1h-1zM14 3h1v1h-1zM1 4h1v1h-1zM14 4h1v1h-1zM0 5h1v1h-1zM15 5h1v1h-1zM0 6h1v1h-1zM15 6h1v1h-1zM0 7h1v1h-1zM15 7h1v1h-1zM0 8h1v1h-1zM15 8h1v1h-1zM0 9h1v1h-1zM15 9h1v1h-1zM0 10h1v1h-1zM15 10h1v1h-1zM1 11h1v1h-1zM14 11h1v1h-1zM1 12h2v1h-2zM13 12h2v1h-2zM2 13h2v1h-2zM12 13h2v1h-2zM3 14h2v1h-2zM11 14h2v1h-2zM5 15h6v1h-6z"/><path fill="#00a000" d="M5 1h1v1h-1zM10 1h1v1h-1zM3 2h1v1h-1zM8 2h1v1h-1zM10 2h1v1h-1zM5 3h3v1h-3zM11 3h1v1h-1zM3 4h1v1h-1zM12 4h1v1h-1zM3 5h1v1h-1zM5 5h4v1h-4zM11 5h1v1h-1zM3 6h1v1h-1zM5 6h1v1h-1zM9 6h2v1h-2zM4 7h2v1h-2zM10 7h1v1h-1zM5 8h1v1h-1zM10 8h2v1h-2zM5 9h2v1h-2zM10 9h1v1h-1zM12 9h1v1h-1zM3 10h2v1h-2zM7 10h4v1h-4zM13 10h1v1h-1zM3 11h1v1h-1zM12 11h1v1h-1zM4 12h1v1h-1zM8 12h4v1h-4zM5 13h1v1h-1zM7 13h1v1h-1zM5 14h1v1h-1zM10 14h1v1h-1z"/><path fill="#d8c400" d="M6 1h4v1h-4zM4 2h4v1h-4zM11 2h2v1h-2zM2 3h3v1h-3zM12 3h2v1h-2zM2 4h1v1h-1zM13 4h1v1h-1zM1 5h2v1h-2zM12 5h3v1h-3zM1 6h2v1h-2zM6 6h3v1h-3zM11 6h4v1h-4zM1 7h3v1h-3zM6 7h4v1h-4zM11 7h4v1h-4zM1 8h4v1h-4zM6 8h4v1h-4zM12 8h3v1h-3zM1 9h4v1h-4zM7 9h3v1h-3zM13 9h2v1h-2zM1 10h2v1h-2zM14 10h1v1h-1zM2 11h1v1h-1zM13 11h1v1h-1zM3 12h1v1h-1zM12 12h1v1h-1zM4 13h1v1h-1zM8 13h4v1h-4zM6 14h4v1h-4z"/><path fill="#ffffff" d="M9 2h1v1h-1zM8 3h3v1h-3zM4 4h8v1h-8zM4 5h1v1h-1zM9 5h2v1h-2zM4 6h1v1h-1zM11 9h1v1h-1zM5 10h2v1h-2zM11 10h2v1h-2zM4 11h8v1h-8zM5 12h3v1h-3zM6 13h1v1h-1z"/></svg>
</body></html>
